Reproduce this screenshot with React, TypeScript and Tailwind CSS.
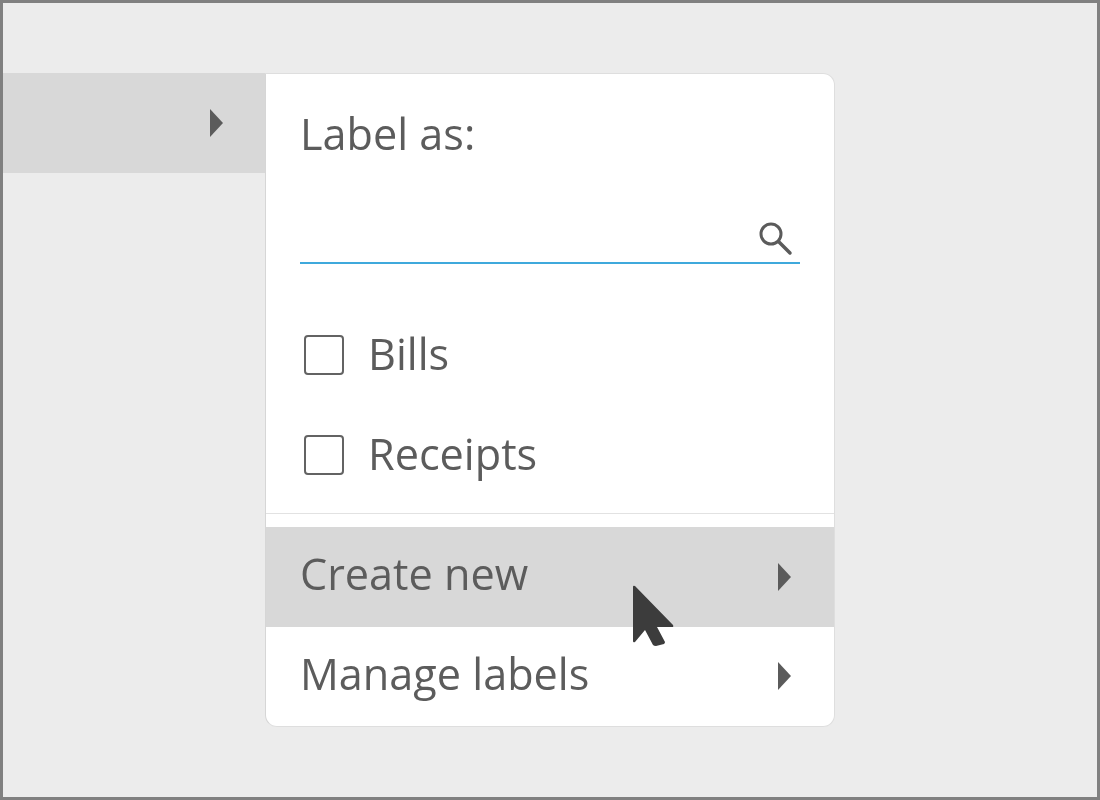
const Arrow = ({ className = "" }: { className?: string }) => (
  <svg width="13" height="28" viewBox="0 0 13 28" className={`shrink-0 ${className}`}>
    <path d="M0 0 L13 14 L0 28 Z" fill="#5b5b5b" />
  </svg>
);

const Checkbox = () => (
  <span className="block w-10 h-10 mt-[1px] rounded-[4px] border-2 border-[#636363] bg-white shrink-0" />
);

const labels = ["Bills", "Receipts"];

export default function App() {
  return (
    <div
      className="w-[1100px] h-[800px] border-[3px] border-[#808080] bg-[#ececec] pt-[70px] flex items-start text-[#5c5c5c]"
      style={{ fontFamily: '"Open Sans", sans-serif' }}
    >
      {/* Parent menu row */}
      <div className="w-[262px] h-[100px] bg-[#d8d8d8] flex items-center justify-end pr-[42px] pb-[1px]">
        <Arrow />
      </div>

      {/* Label menu */}
      <div className="relative w-[570px] h-[654px] bg-white border border-[#dedede] border-l-[#d6d6d6] rounded-r-[12px] rounded-bl-[12px] text-[43.2px] leading-[56px]">
        <div className="px-[34px] pt-[32px] will-change-transform">Label as:</div>

        <div className="mx-[34px] mt-[56px] h-[46px] border-b-2 border-[#3fa9dc] flex justify-end items-start pt-[3px]">
          <svg width="36" height="36" viewBox="0 0 36 36" fill="none" stroke="#5b5b5b" className="mr-[6px]">
            <circle cx="13" cy="13" r="10" strokeWidth="3" />
            <path d="M20.5 20.5 L32 32" strokeWidth="3.5" strokeLinecap="round" />
          </svg>
        </div>

        <div className="mt-[45px] flex flex-col">
          {labels.map((label) => (
            <div key={label} className="h-[100px] flex items-center gap-[24px] pl-[38px] pb-[10px]">
              <Checkbox />
              <span className="will-change-transform">{label}</span>
            </div>
          ))}
        </div>

        <div className="mt-[4px] h-[14px] border-t border-[#e2e2e2]" />

        <div className="h-[100px] bg-[#d8d8d8] flex items-center justify-between pl-[34px] pr-[43px]">
          <span className="pb-[6px] will-change-transform">Create new</span>
          <Arrow />
        </div>
        <div className="h-[100px] flex items-center justify-between pl-[34px] pr-[43px]">
          <span className="pb-[6px] will-change-transform">Manage labels</span>
          <Arrow className="mb-[2px]" />
        </div>

        {/* Mouse pointer */}
        <svg width="44" height="62" viewBox="0 0 44 62" className="absolute left-[366px] top-[511px] will-change-transform">
          <path
            d="M1 2 Q1 0 3 1 L41 40 Q42 42 40 42 L25 42 L33 57 Q33 58 32 59 L24 61 Q22 61 21 60 L13 45 L3 57 Q1 58 1 56 Z"
            fill="#3c3c3c"
          />
        </svg>
      </div>
    </div>
  );
}
